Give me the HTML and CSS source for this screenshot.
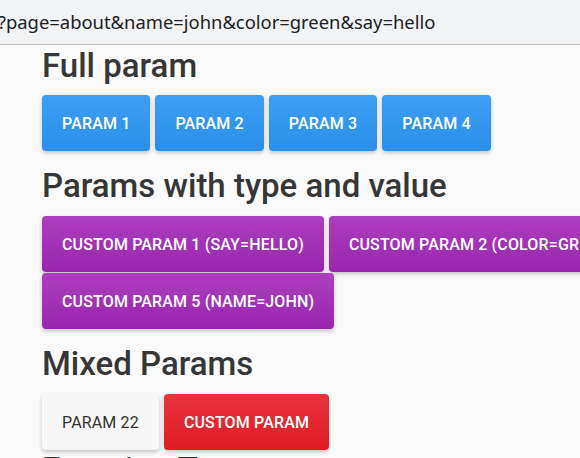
FILE: index.html
```html
<!DOCTYPE html>
<html>
<head>
<meta charset="utf-8">
<link rel="stylesheet" href="styles.css">
</head>
<body>
<div class="urlbar"><span class="url">?page=about&amp;name=john&amp;color=green&amp;say=hello</span></div>
<main class="content">
  <h2 class="title first">Full param</h2>
  <div class="row">
    <button class="btn blue">Param 1</button>
    <button class="btn blue">Param 2</button>
    <button class="btn blue">Param 3</button>
    <button class="btn blue">Param 4</button>
  </div>
  <h2 class="title">Params with type and value</h2>
  <div class="row">
    <button class="btn purple">Custom param 1 (say=hello)</button>
    <button class="btn purple">Custom param 2 (color=green)</button>
    <button class="btn purple">Custom param 5 (name=john)</button>
  </div>
  <h2 class="title">Mixed Params</h2>
  <div class="row">
    <button class="btn plain">Param 22</button>
    <button class="btn red">Custom param</button>
  </div>
  <h2 class="title last">Function Type</h2>
</main>
</body>
</html>
```

FILE: styles.css
```css
html, body {
  margin: 0;
  padding: 0;
  background: #fafafa;
  overflow: hidden;
}
body {
  width: 580px;
  height: 458px;
  font-family: Roboto, "Noto Sans", sans-serif;
}
.urlbar {
  height: 44px;
  background: #f1f3f4;
  border-bottom: 1px solid #bfbfbf;
  display: flex;
  align-items: center;
  overflow: hidden;
}
.url {
  margin-left: -2px;
  margin-top: -2px;
  font-family: "Noto Sans", sans-serif;
  font-size: 18.4px;
  color: #202124;
  white-space: nowrap;
}
.content {
  padding-left: 42px;
  width: 720px;
}
.title {
  margin: 15px 0 10px 0;
  font-size: 33px;
  line-height: 40px;
  font-weight: 500;
  color: #363636;
  white-space: nowrap;
}
.title.first {
  margin-top: 1px;
  margin-bottom: 9px;
}
.title.last {
  margin-top: 4px;
  line-height: 32px;
}
.row {
  display: flex;
  flex-wrap: wrap;
  gap: 1px 5px;
  width: 700px;
}
.btn {
  height: 56px;
  padding: 0 20px;
  border: none;
  border-radius: 4px;
  font-family: Roboto, sans-serif;
  font-size: 16px;
  font-weight: 500;
  letter-spacing: 0.15px;
  text-transform: uppercase;
  color: #fff;
  white-space: nowrap;
  box-shadow: 0 2px 4px rgba(0,0,0,0.22);
  flex: none;
}
.blue {
  background: linear-gradient(#3d9ff2, #2a8ee9);
}
.purple {
  background: linear-gradient(#ab3fbd, #9a25b0);
}
.red {
  background: linear-gradient(#e8343e, #e01b24);
}
.plain {
  background: #f7f7f7;
  color: #333;
  font-weight: 400;
}
```
